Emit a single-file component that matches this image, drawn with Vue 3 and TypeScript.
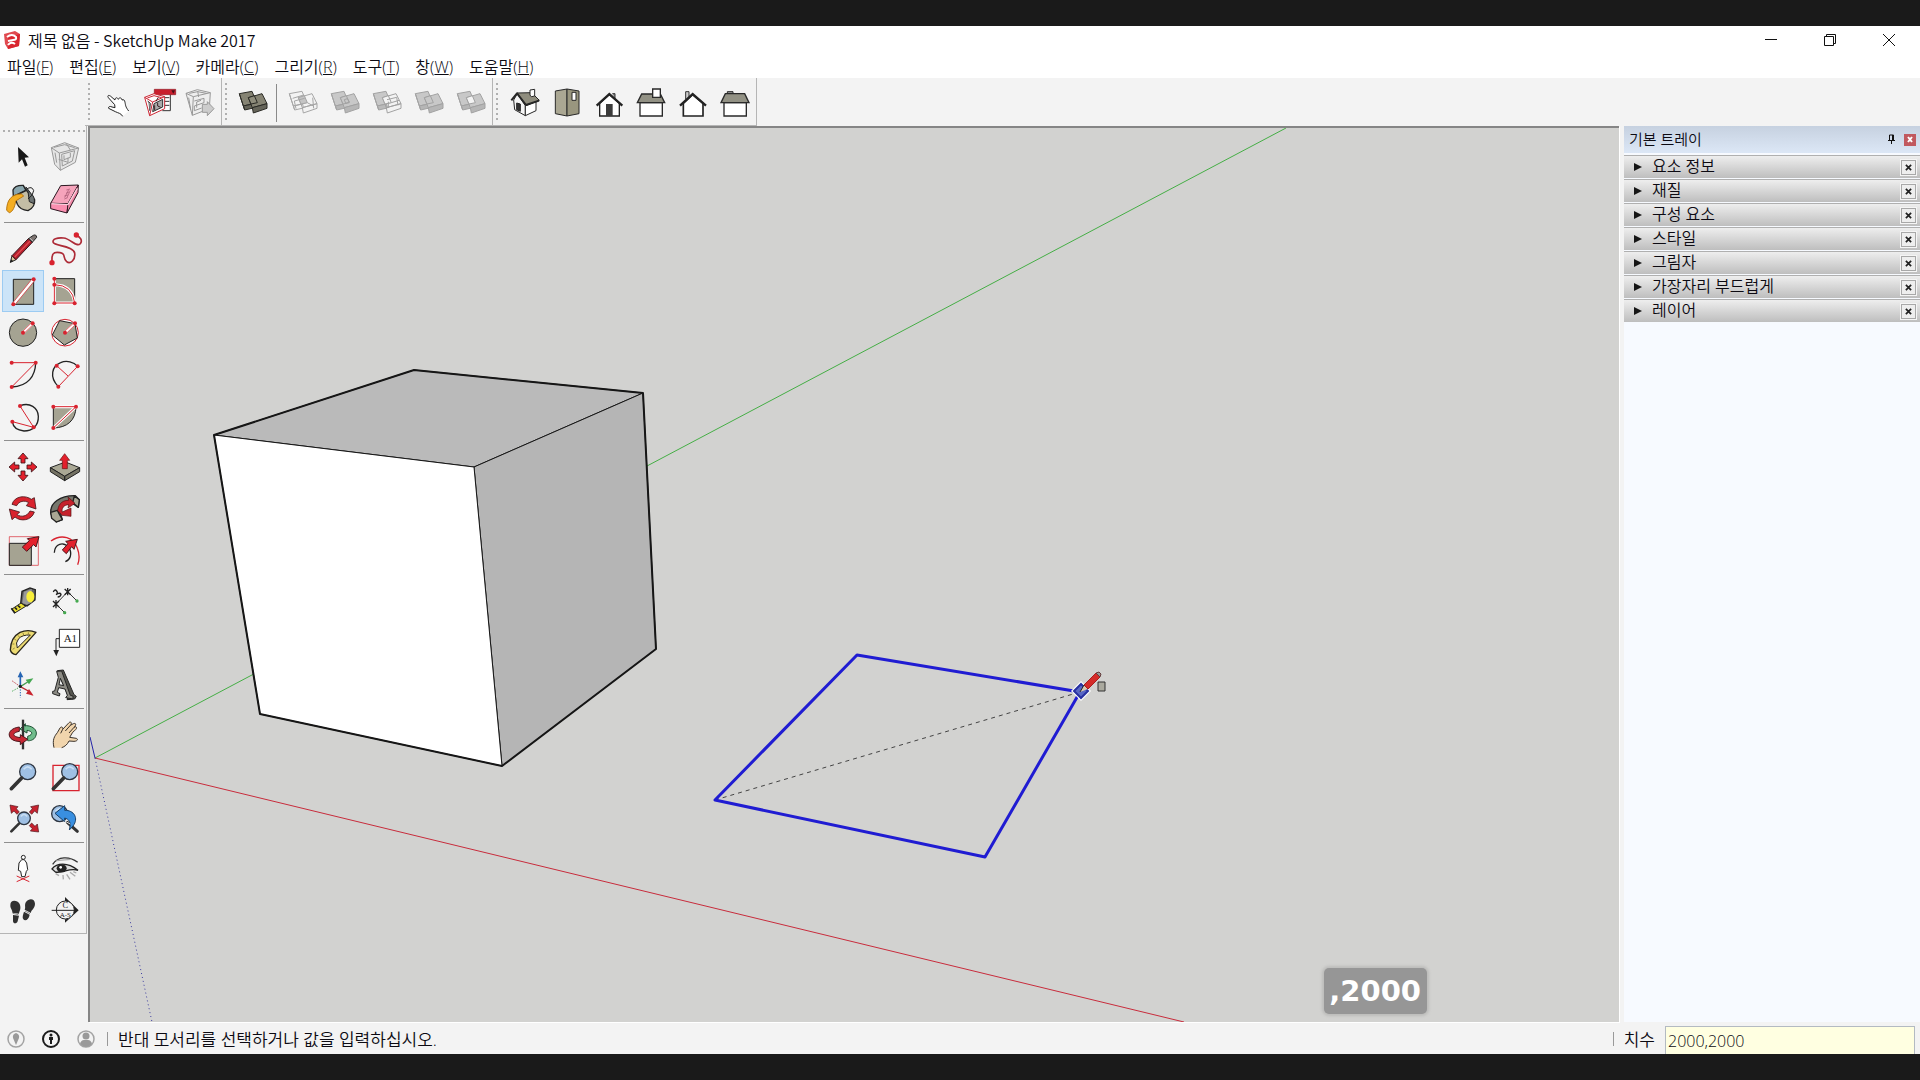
<script setup lang="ts">
import { ref } from 'vue'

interface Icon {
  name: string
  box: string
  art: string
}

const menus = [
  { label: '파일', key: 'F' },
  { label: '편집', key: 'E' },
  { label: '보기', key: 'V' },
  { label: '카메라', key: 'C' },
  { label: '그리기', key: 'R' },
  { label: '도구', key: 'T' },
  { label: '창', key: 'W' },
  { label: '도움말', key: 'H' },
]

const panels = ['요소 정보', '재질', '구성 요소', '스타일', '그림자', '가장자리 부드럽게', '레이어']

const size = ref('2000,2000')

const TAUPE = '#a5a392'
const RED = '#d8232f'

// Two overlapping boxes, shared by all solid tools
function solid(stroke: string, a: string, b: string, mid: string, side: string, extra = ''): string {
  return `<g stroke="${stroke}" stroke-width="3" stroke-linejoin="round">
    <polygon fill="${a}" points="22,35 60,28 74,62 34,72"/>
    <polygon fill="${a === 'none' ? 'none' : side}" points="34,72 62,66 64,78 38,84"/>
    <path fill="none" d="M22 35L26 48L38 84"/>
    <polygon fill="${b}" points="49,47 90,35 105,65 61,77"/>
    <polygon fill="${b === 'none' ? 'none' : side}" points="61,77 105,65 105,79 64,93"/>
    <polygon fill="${mid}" points="49,47 67,41 76,62 57,66"/>${extra}</g>`
}

// A node handle used by the drawing tools
const dot = (x: number, y: number) => `<circle cx="${x}" cy="${y}" r="6" fill="${RED}"/>`
const arrow = (x: number, y: number, angle: number) =>
  `<path transform="translate(${x} ${y}) rotate(${angle})" d="M0 -42L15 -25H6V-12H-6V-25H-15Z" fill="#e3202c" stroke="#3a1518" stroke-width="2.5"/>`
const lens = (x: number, y: number, r: number) =>
  `<circle cx="${x}" cy="${y}" r="${r}" fill="#9fc0e4" stroke="#2c3440" stroke-width="4"/><path d="M${x - r * 0.5} ${y - r * 0.3}Q${x} ${y - r * 0.9} ${x + r * 0.5} ${y - r * 0.3}" fill="none" stroke="#c9def3" stroke-width="5"/>`

const topGroups: Icon[][][] = [
  [[
    { name: '상호 작용', box: '45 18 126 126', art: '<path fill="#fff" stroke="#222" stroke-width="3" stroke-linejoin="round" d="M128 121C124 112 114 111 106 107L86 97C84 91 91 90 96 93L105 95L104 86L86 66C81 60 84 56 91 60L105 72C105 64 112 63 115 70C118 63 125 65 126 72C132 69 134 74 135 79C137 88 136 92 146 105"/>' },
    { name: '구성 요소 옵션', box: '171 18 126 126', art: '<path fill="#fff" d="M228 55H271V105H228Z"/><path d="M271 55V104H247M250 65H268M252 76H268M252 88H268" fill="none" stroke="#333" stroke-width="3"/><path fill="#c91f2d" stroke="#8d121d" stroke-width="2" d="M223 40H287V56H223Z"/><path d="M274 43H285L280 53Z" fill="#471018"/><g fill="#fff" stroke="#cc2634" stroke-width="3"><path d="M194 64L222 53L254 62V98L209 119Z"/><path fill="none" d="M194 64L218 78L209 119M218 78L254 62M202 66L222 59L245 65"/></g><path d="M222 83L248 70V93L218 107ZM203 75L211 82L209 104" fill="#aaa" stroke="#333" stroke-width="3"/><path d="M224 88V102M233 80V90L242 94M228 76L235 64" fill="none" stroke="#3a2024" stroke-width="3"/>' },
    { name: '구성 요소 속성', box: '297 18 126 126', art: '<g fill="none" stroke="#999" stroke-width="3"><path fill="#eee" d="M318 52L352 41L391 50L388 98L337 118Z"/><path d="M318 52L340 62L337 118M340 62L391 50M328 52L353 47L379 52M343 75L372 67V80L343 90V104L365 96M326 65L332 101M350 95V78L363 73M353 45L356 63"/><path fill="#ccc" d="M367 85H382V77L402 98L382 119V109H367Z"/></g>' },
  ]],
  [
    [{ name: '외부 쉘', box: '0 0 126 126', art: solid('#292924', '#858373', '#858373', '#8e8c7b', '#656459') }],
    [
      { name: '교차', box: '0 0 126 126', art: solid('#a6a6a6', 'none', 'none', '#c4c4c4', '#bbb', '<path fill="none" d="M32 49L65 39M42 80L37 57L68 49M76 62L94 72M92 47L95 79"/>') },
      { name: '결합', box: '0 0 126 126', art: solid('#a2a2a2', '#c8c8c8', '#c8c8c8', '#c8c8c8', '#b6b6b6', '<path fill="none" d="M61 53L70 50L76 60L65 64Z"/>') },
      { name: '빼기', box: '0 0 126 126', art: solid('#a2a2a2', '#c8c8c8', 'none', '#f3f3f3', '#bababa', '<path fill="none" d="M63 53L92 46L96 70M76 62L99 55M67 78V59"/>') },
      { name: '자르기', box: '0 0 126 126', art: solid('#a2a2a2', '#c8c8c8', '#c8c8c8', '#c8c8c8', '#b6b6b6') },
      { name: '분할', box: '0 0 126 126', art: solid('#a2a2a2', '#c8c8c8', '#c8c8c8', '#f3f3f3', '#b6b6b6') },
    ],
  ],
  [[
    { name: '등각', box: '219 18 126 126', art: '<g stroke="#262626" stroke-width="3" stroke-linejoin="round"><path fill="#f5f5f5" d="M262 53L251 72L254 101L286 119V89Z"/><path fill="#fff" d="M286 88L318 77V104L286 119Z"/><path fill="#333" d="M260 81L271 84V106L260 101Z"/><path fill="#8f8d7e" d="M261 51L305 50L328 73L288 89Z"/><path fill="none" stroke-width="6" d="M244 73L261 52L288 87L327 74"/><path fill="#fff" d="M300 42L314 40V60L305 62L300 58Z"/></g>' },
    { name: '상단', box: '345 18 126 126', art: '<g stroke="#292929" stroke-width="3" stroke-linejoin="round"><path fill="#aaa793" d="M376 45L411 39V120L376 113Z"/><path fill="#99967f" d="M411 39L447 45V113L411 120Z"/><path fill="#fff" d="M426 49H438V73H426Z"/></g>' },
    { name: '정면', box: '471 18 126 126', art: '<path d="M509 82V120H568V82L538 56Z" fill="#fff" stroke="#222" stroke-width="4"/><path d="M528 84H548V120H528Z" fill="#3b3b3b"/><path d="M547 53H555V67" fill="#888" stroke="#333" stroke-width="3"/><path d="M500 89L538 54L577 89" fill="none" stroke="#222" stroke-width="7"/>' },
    { name: '오른쪽', box: '597 18 126 126', art: '<g stroke="#292929" stroke-width="4"><path fill="#fff" d="M630 80H697V120H630Z"/><path fill="#929184" d="M635 54H691L704 80H622Z"/><path fill="#fff" d="M668 39H691V64H668Z"/></g>' },
    { name: '뒤', box: '723 18 126 126', art: '<path d="M767 70V47H777V62" fill="#ccc" stroke="#333" stroke-width="3"/><path d="M760 82V120H819V82L788 56Z" fill="#fff" stroke="#222" stroke-width="5"/><path d="M750 89L788 54L828 89" fill="none" stroke="#222" stroke-width="7"/>' },
    { name: '왼쪽', box: '849 18 126 126', art: '<g stroke="#292929" stroke-width="4"><path fill="#999" stroke-width="3" d="M892 52V47H909V52"/><path fill="#fff" d="M882 80H949V120H882Z"/><path fill="#929184" d="M886 53H944L957 80H873Z"/></g>' },
  ]],
]

const sideGroups: Icon[][] = [
  [
    { name: '선택', box: '6 33 126 126', art: '<path fill="#171717" d="M54 66L87 97L74 98L83 121L75 125L66 103L56 113Z"/>' },
    { name: '구성 요소 만들기', box: '132 33 126 126', art: '<g fill="none" stroke="#999" stroke-width="3" stroke-linejoin="round"><path fill="#e6e6e6" d="M154 68L194 53L236 69L226 112L181 136L164 118Z"/><path d="M154 68L178 84L181 136M178 84L236 69M162 67L194 59L224 68M185 88L224 77L217 108L187 123ZM165 83L170 113M199 56L211 75M176 103L204 112M192 91V104L211 97V84M204 98V112"/></g>' },
    { name: '페인트통', box: '6 159 126 126', art: '<path d="M39 195Q44 180 70 181L78 196L40 214Z" fill="#8aa6ad" stroke="#222" stroke-width="4"/><path d="M43 214L79 196L104 224Q106 247 84 257Q60 255 52 238Z" fill="#c3bda5" stroke="#222" stroke-width="4"/><path d="M70 183L84 200L88 230L102 236Q107 218 94 207L78 186" fill="#6d7474" stroke="#222" stroke-width="3"/><path d="M20 256C20 226 34 207 64 207L71 213L47 228C45 245 38 261 28 263Z" fill="#f5ae21" stroke="#b87812" stroke-width="3"/><path d="M79 193Q96 181 101 197Q100 211 84 222" fill="none" stroke="#222" stroke-width="3"/>' },
    { name: '지우개', box: '132 159 126 126', art: '<g stroke="#2b1720" stroke-width="3" stroke-linejoin="round"><path fill="#f6a3bb" d="M182 182L235 180L204 236L152 235Z"/><path fill="#fa8fb0" d="M152 235L204 236L201 264L152 251Z"/><path fill="#f18aa8" d="M235 180L234 203L201 264L204 236Z"/></g><path d="M154 236L204 239L232 190" stroke="#fbd0de" stroke-width="4" fill="none"/><path d="M193 222L203 218M193 213L204 210M198 205L207 201M199 195L210 192M194 218L206 194M201 218L211 196" stroke="#a3546f" stroke-width="2"/>' },
  ],
  [
    { name: '선', box: '6 309 126 126', art: '<path fill="#d9c49b" stroke="#222" stroke-width="3" d="M31 412L36 392L48 404Z"/><path d="M30 413L34 403L40 409Z" fill="#222"/><path d="M36 392L85 341L97 352L48 404Z" fill="#b41e2b" stroke="#321318" stroke-width="3"/><path d="M44 396L91 347" stroke="#e04b51" stroke-width="4"/><path d="M85 341L100 331Q109 327 110 337L97 352Z" fill="#7e7572" stroke="#222" stroke-width="3"/><path d="M89 338L100 349" stroke="#ddd" stroke-width="2"/>' },
    { name: '자유형', box: '132 309 126 126', art: `<path d="M228 331C241 334 249 348 240 357C230 367 211 341 191 339C172 337 155 343 160 353C164 363 220 362 224 384C227 404 211 419 200 410C187 399 199 386 180 383C157 379 155 389 156 412" fill="none" stroke="#ad2b37" stroke-width="5"/><circle cx="229" cy="330" r="8" fill="${RED}"/><circle cx="156" cy="413" r="8" fill="${RED}"/>` },
    { name: '직사각형', box: '6 15 126 126', art: `<path fill="${TAUPE}" stroke="#222" stroke-width="3" d="M40 43H101V118H40Z"/><path d="M40 118L101 43" stroke="#fff" stroke-width="9"/><path d="M38 114L97 41M43 121L104 47" stroke="${RED}" stroke-width="2"/>${dot(40, 118)}${dot(101, 43)}` },
    { name: '회전된 직사각형', box: '132 15 126 126', art: `<path fill="${TAUPE}" stroke="#222" stroke-width="3" d="M163 41H224V114H163Z"/><path d="M163 59Q218 60 224 114H163V41" fill="none" stroke="#fff" stroke-width="9"/><path d="M163 59Q218 60 224 114H163V41" fill="none" stroke="${RED}" stroke-width="3"/>${dot(163, 41)}${dot(163, 59)}${dot(163, 115)}${dot(224, 115)}` },
    { name: '원', box: '6 141 126 126', art: `<circle cx="69" cy="203" r="41" fill="${TAUPE}" stroke="#222" stroke-width="3"/><path d="M69 203L98 175" stroke="#fff" stroke-width="9"/><path d="M66 201L95 173M71 206L101 177" stroke="${RED}" stroke-width="2"/>${dot(69, 203)}${dot(98, 175)}` },
    { name: '다각형', box: '132 141 126 126', art: `<circle cx="195" cy="203" r="40" fill="#fff" stroke="${RED}" stroke-width="3"/><path fill="${TAUPE}" stroke="#222" stroke-width="3" d="M179 167L225 176L232 219L193 240L157 210Z"/><path d="M195 203L225 175" stroke="#fff" stroke-width="9"/><path d="M192 201L222 173M198 206L228 177" stroke="${RED}" stroke-width="2"/>${dot(195, 203)}${dot(225, 175)}` },
    { name: '원호', box: '6 267 126 126', art: `<path d="M107 293C106 333 84 364 35 366" fill="none" stroke="#222" stroke-width="4"/><path d="M35 293H107L35 366" fill="none" stroke="${RED}" stroke-width="3"/>${dot(35, 293)}${dot(107, 293)}${dot(35, 366)}` },
    { name: '2점 원호', box: '132 267 126 126', art: `<path d="M175 365C146 334 157 303 182 293C200 285 221 291 233 304" fill="none" stroke="#222" stroke-width="4"/><path d="M233 304L175 365M170 302L204 333" stroke="${RED}" stroke-width="3"/>${dot(170, 302)}${dot(233, 304)}${dot(175, 365)}` },
    { name: '3점 원호', box: '6 393 126 126', art: `<path d="M61 422C89 411 114 428 115 454C116 483 97 498 72 498C52 496 39 485 37 470" fill="none" stroke="#222" stroke-width="4"/><path d="M60 423L101 487L37 470" fill="none" stroke="${RED}" stroke-width="3"/>${dot(60, 423)}${dot(101, 487)}${dot(37, 470)}` },
    { name: '파이', box: '132 393 126 126', art: `<path d="M228 425C227 466 202 488 160 489V425Z" fill="${TAUPE}" stroke="#222" stroke-width="3"/><path d="M160 489L228 425H160" fill="none" stroke="#fff" stroke-width="9"/><path d="M160 489L228 425H160" fill="none" stroke="${RED}" stroke-width="3"/>${dot(160, 425)}${dot(228, 425)}${dot(160, 489)}` },
  ],
  [
    { name: '이동', box: '6 18 126 126', art: [0, 90, 180, 270].map((a) => arrow(69, 81, a)).join('') },
    { name: '밀기/끌기', box: '132 18 126 126', art: '<g stroke="#222" stroke-width="3" stroke-linejoin="round"><path fill="#aaa895" d="M151 83L196 66L239 83L194 109Z"/><path fill="#757364" d="M151 83V95L194 122V109ZM239 83V95L194 122V109Z"/></g><path d="M194 41L209 61H202V86H187V61H179Z" fill="#e3202c" stroke="#611" stroke-width="2"/>' },
    { name: '회전', box: '6 144 126 126', art: '<g fill="#d9232e" stroke="#4b171b" stroke-width="2.5"><path d="M36 193C44 167 77 165 94 178L103 173L108 207L79 197L86 188C74 180 57 183 50 197Z"/><path d="M103 216C95 242 62 246 45 231L36 239L28 207L59 216L51 224C64 232 81 230 90 213Z"/></g>' },
    { name: '따라가기', box: '132 144 126 126', art: '<g stroke="#222" stroke-width="4" stroke-linejoin="round"><path d="M153 222C147 188 182 166 226 167L238 179L235 202L219 191C186 188 174 205 187 239L169 246Z" fill="#77776d"/><path fill="#aaa895" d="M152 217L172 211L187 239L169 246L155 235ZM223 168L238 179L235 202L218 188Z"/></g><path d="M173 211C177 187 191 181 206 181L204 171L225 190L204 204L206 194C191 195 184 205 187 216L213 204V229L186 226Z" fill="#c6222c" stroke="#511" stroke-width="2"/>' },
    { name: '배율', box: '6 270 126 126', art: `<path d="M28 290H115V376H28Z" fill="none" stroke="${RED}" stroke-width="2"/><path d="M28 310H94V376H28Z" fill="${TAUPE}" stroke="#222" stroke-width="3"/><path d="M117 290L108 321L101 314L80 334L67 321L88 302L82 296Z" fill="#e3202c" stroke="#4b171b" stroke-width="3"/>` },
    { name: '오프셋', box: '132 270 126 126', art: `<path d="M153 303C185 280 221 292 232 325C240 346 238 361 233 374" fill="none" stroke="${RED}" stroke-width="4"/><path d="M163 338C164 311 190 303 207 323C218 343 210 360 196 365" fill="none" stroke="#222" stroke-width="4"/><path d="M232 298L222 328L215 320L199 341L187 330L204 311L197 304Z" fill="#e3202c" stroke="#4b171b" stroke-width="3"/>` },
  ],
  [
    { name: '줄자', box: '6 30 126 126', art: '<path d="M66 64L90 54L106 59L105 90L81 108L62 101Z" fill="#666" stroke="#222" stroke-width="4"/><path d="M72 65L95 57V98L80 104L67 99Z" fill="#999"/><ellipse cx="91" cy="80" rx="12" ry="17" fill="#f8ee3b"/><path d="M63 99L36 117L44 129L77 109Z" fill="#eadf33" stroke="#222" stroke-width="3"/><path d="M34 115L45 130M45 113L51 119M54 107L61 113" stroke="#222" stroke-width="5"/>' },
    { name: '치수', box: '132 30 126 126', art: '<path d="M231 93L203 65L168 102L194 128" fill="none" stroke="#333" stroke-width="3"/><path d="M194 57L212 74M212 57L194 74M203 54V76M159 93L177 111M177 93L159 111M168 90V115" stroke="#222" stroke-width="4"/><circle cx="231" cy="93" r="5" fill="#45a94f"/><circle cx="194" cy="128" r="5" fill="#45a94f"/><path d="M160 66Q164 56 170 63Q175 70 168 74Q180 66 183 73Q182 80 173 81" fill="none" stroke="#222" stroke-width="4"/>' },
    { name: '각도기', box: '6 156 126 126', art: '<path d="M48 254L108 187Q84 177 60 187Q32 202 31 240Q34 252 48 254Z" fill="#ecdb72" stroke="#29251a" stroke-width="4" stroke-linejoin="round"/><path d="M38 238L44 234M37 222L43 222M43 207L49 211M54 196L59 202M69 189L71 195M85 187L85 192" stroke="#705f21" stroke-width="2"/><path d="M52 234L91 195Q67 194 56 206Q45 218 52 234Z" fill="#f7f7f4" stroke="#29251a" stroke-width="3"/>' },
    { name: '텍스트', box: '132 156 126 126', art: '<path d="M178 178H239V232H178Z" fill="#fff" stroke="#222" stroke-width="3"/><path d="M178 206H168V246" fill="none" stroke="#222" stroke-width="3"/><path d="M160 240H177L169 259Z" fill="#222"/><text x="191" y="215" font-family="Liberation Serif" font-size="33" font-weight="400" fill="#222">A1</text>' },
    { name: '축', box: '6 282 126 126', art: '<path d="M61 319V350" stroke="#2665b4" stroke-width="5"/><path d="M61 304L70 322H53Z" fill="#2665b4"/><path d="M61 350L83 336" stroke="#459b50" stroke-width="4"/><path d="M100 325L87 343L77 329Z" fill="#45a852"/><path d="M61 350L85 363" stroke="#b82630" stroke-width="4"/><path d="M101 377L78 371L87 357Z" fill="#c9242e"/><path d="M37 333L61 350" stroke="#b82630" stroke-width="3" stroke-dasharray="4 4"/><path d="M61 350V383" stroke="#2665b4" stroke-width="3" stroke-dasharray="4 4"/><path d="M61 350L36 364" stroke="#45a852" stroke-width="3" stroke-dasharray="4 4"/><circle cx="61" cy="349" r="5" fill="#222"/>' },
    { name: '3D 텍스트', box: '132 282 126 126', art: '<g fill="#8c8b84" stroke="#252525" stroke-width="3" stroke-linejoin="round"><path fill="#55554f" d="M172 302L190 300L222 374L229 379L224 387L201 389L205 379Z"/><path fill-rule="evenodd" d="M170 304L185 303L211 376L219 378V387L197 383L202 376L195 357L176 353L172 367L180 371L178 378L158 371V364L164 363L175 322ZM181 325L177 344L191 347Z"/></g>' },
  ],
  [
    { name: '궤도', box: '6 27 126 126', art: '<path d="M69 62C96 59 116 75 107 94C102 106 88 108 83 107V94C102 88 97 78 81 76V84L60 72L76 56V64" fill="#70bd8c" stroke="#1e5134" stroke-width="3"/><path d="M69 44V133" stroke="#333" stroke-width="7"/><path d="M58 66C20 71 19 101 47 108L61 110V119L83 103L61 89V98C37 95 34 84 58 79Z" fill="#c62835" stroke="#4c151b" stroke-width="3"/>' },
    { name: '이동 보기', box: '132 27 126 126', art: '<path d="M162 128C156 104 164 93 172 83L180 69C184 63 190 67 188 73L207 53C212 48 218 54 211 61L220 56C229 53 229 60 222 67L227 65C233 68 229 73 218 82L209 97L229 100C236 103 231 109 222 109L207 108C202 119 194 125 185 128Z" fill="#f1d5ad"/><path d="M162 128C156 104 164 93 172 83L180 69C184 63 190 67 188 73L207 53C212 48 218 54 211 61L220 56C229 53 229 60 222 67L227 65C233 68 229 73 218 82L209 97L229 100C236 103 231 109 222 109L207 108C202 119 194 125 185 128M188 73L182 85M211 61L196 78M222 67L207 84" fill="none" stroke="#3b332b" stroke-width="3"/>' },
    { name: '확대/축소', box: '6 153 126 126', art: `${lens(83, 200, 24)}<path d="M65 219L34 251" stroke="#333" stroke-width="11" stroke-linecap="round"/>` },
    { name: '창 확대/축소', box: '132 153 126 126', art: `<path d="M159 181H237V257H159Z" fill="none" stroke="${RED}" stroke-width="4"/>${lens(209, 200, 24)}<path d="M191 219L160 251" stroke="#333" stroke-width="11" stroke-linecap="round"/>` },
    { name: '전체 확대/축소', box: '6 279 126 126', art: `${lens(72, 340, 19)}<path d="M57 356L34 379" stroke="#333" stroke-width="8" stroke-linecap="round"/><g fill="#c6222e" stroke="#4c151b" stroke-width="2"><path d="M30 300L54 305L49 311L58 321L51 328L42 318L34 325Z"/><path d="M116 300L92 305L97 311L88 321L95 328L104 318L112 325Z"/><path d="M116 381L91 378L97 371L88 362L95 354L105 364L112 357Z"/></g>` },
    { name: '이전 보기', box: '132 279 126 126', art: `${lens(179, 326, 24)}<path d="M202 352L232 379" stroke="#333" stroke-width="9" stroke-linecap="round"/><path d="M165 325L194 302V316C222 315 237 340 219 363L208 375C215 349 206 343 194 339V350Z" fill="#398fe0" stroke="#173f66" stroke-width="3"/><path d="M194 348L211 357" stroke="#ddd" stroke-width="3"/>` },
  ],
  [
    { name: '카메라 배치', box: '6 429 126 126', art: `<path d="M50 530L88 513M50 513L88 530" stroke="${RED}" stroke-width="3"/><path d="M65 464L57 474L55 496L62 499L65 515H75L79 499L83 494L80 474L73 464Z" fill="#fff" stroke="#222" stroke-width="3"/><circle cx="70" cy="457" r="6" fill="#fff" stroke="#222" stroke-width="3"/>` },
    { name: '둘러보기', box: '132 429 126 126', art: '<path d="M158 478C174 454 208 453 233 472" fill="none" stroke="#333" stroke-width="4"/><path d="M156 492C170 474 202 470 234 496C207 487 190 506 166 501Z" fill="#ddd" stroke="#222" stroke-width="4"/><ellipse cx="185" cy="490" rx="15" ry="12" fill="#222"/><circle cx="182" cy="487" r="4" fill="#fff"/><path d="M167 506L177 512M189 510L190 523M200 508L210 523M210 502L226 514M220 500L229 504M169 467L212 463" stroke="#aaa" stroke-width="4"/>' },
    { name: '걷기', box: '6 555 126 126', art: '<path d="M31 600C31 583 52 585 59 597C65 611 57 621 57 626L37 623C38 615 30 610 31 600ZM39 630L57 632L53 649C49 659 37 656 39 644ZM78 591C87 579 104 580 105 596C105 612 91 616 93 624L74 614C78 607 72 600 78 591ZM72 620L89 629C87 643 76 650 70 643C66 638 69 629 72 620Z" fill="#303030"/><path d="M38 625L55 629M75 618L90 626" stroke="#888" stroke-width="3"/>' },
    { name: '단면 평면', box: '132 555 126 126', art: '<path d="M195 576L236 616L195 653V643A27 27 0 0 0 195 588Z" fill="#222"/><circle cx="196" cy="615" r="27" fill="#f3f3f3" stroke="#222" stroke-width="3"/><path d="M155 616H233" stroke="#222" stroke-width="3"/><g font-family="Liberation Serif" fill="#222" text-anchor="middle"><text x="196" y="610" font-size="25">C</text><text x="196" y="636" font-size="21">A-S</text></g>' },
  ],
]
</script>

<template>
  <div class="app">
    <header class="titlebar">
      <svg class="logo" viewBox="0 0 18 20" aria-hidden="true">
        <path d="M1 4L12 1L17 4L16 16L5 19L2 14Z" fill="#e04a50" />
        <path d="M5 7L17 4L16 16L5 19Z" fill="#d9252e" />
        <path d="M4 7Q9 3 13 7Q14 10 10 10L5 11M5 15Q8 11 12 14" fill="none" stroke="#fff" stroke-width="2" />
      </svg>
      <h1>제목 없음 - SketchUp Make 2017</h1>
      <div class="window-buttons">
        <button aria-label="최소화"><svg viewBox="0 0 14 14"><path d="M1 6.5H13" /></svg></button>
        <button aria-label="이전 크기로"><svg viewBox="0 0 14 14"><path d="M1.5 3.5H10.500V12.500H1.500ZM3.500 3.500V1.500H12.500V10.500H10.500" /></svg></button>
        <button aria-label="닫기"><svg viewBox="0 0 14 14"><path d="M1 1L13 13M13 1L1 13" /></svg></button>
      </div>
    </header>

    <nav class="menubar">
      <button v-for="m in menus" :key="m.key">{{ m.label }}(<u>{{ m.key }}</u>)</button>
    </nav>

    <div class="top-tools">
      <div v-for="(group, g) in topGroups" :key="g" class="top-group">
        <div v-for="(part, p) in group" :key="p" class="part">
          <button v-for="icon in part" :key="icon.name" class="tool" :aria-label="icon.name">
            <svg :viewBox="icon.box" v-html="icon.art"></svg>
          </button>
        </div>
      </div>
    </div>

    <div class="workspace">
      <aside class="side">
        <div class="side-tools">
          <div v-for="(group, g) in sideGroups" :key="g" class="side-group">
            <button
              v-for="icon in group"
              :key="icon.name"
              class="tool"
              :class="{ active: icon.name === '직사각형' }"
              :aria-label="icon.name"
            >
              <svg :viewBox="icon.box" v-html="icon.art"></svg>
            </button>
          </div>
        </div>
      </aside>

      <main class="viewport">
        <svg class="scene" viewBox="90 128 1529 894" preserveAspectRatio="xMinYMin slice" fill="none">
          <path d="M95 758L1286 128" stroke="#45ae45" />
          <path d="M95 758L1184 1022" stroke="#c82c3c" />
          <path d="M90 737L95 758" stroke="#2424a8" />
          <path d="M95 758L152 1022" stroke="#3c3ca0" stroke-dasharray="1 3" />
          <g stroke="#161616" stroke-linejoin="round">
            <path d="M214 435L414 370L643 393L474 467Z" fill="#bababa" />
            <path d="M474 467L643 393L656 649L502 766Z" fill="#b5b5b5" />
            <path d="M214 435L474 467L502 766L260 714Z" fill="#fff" />
            <path d="M214 435L414 370L643 393L656 649L502 766L260 714Z" stroke-width="2" />
          </g>
          <path d="M715 800L1080 692" stroke="#444" stroke-dasharray="4 4" />
          <path d="M857 655L1080 692L985 857L715 800Z" stroke="#201cd2" stroke-width="3" stroke-linejoin="round" />
          <path d="M1081 681L1091 691L1081 701L1071 691Z" fill="#fff" />
          <path d="M1081 684L1088 691L1081 698L1074 691Z" fill="#5867c4" stroke="#2730a0" stroke-width="2" />
          <path d="M1080 692L1084 685L1088 689Z" fill="#d8c8b0" />
          <path d="M1084 685L1096 673L1100 677L1088 689Z" fill="#d42b29" stroke="#a81e20" />
          <path d="M1080 692L1084 685" stroke="#222" />
          <path d="M1096 673L1099 672L1101 674L1100 677Z" fill="#999" stroke="#643c3c" />
          <path d="M1098 682H1105V691H1098Z" fill="#aaa99e" stroke="#333" />
        </svg>
        <output class="typed">,2000</output>
      </main>

      <aside class="tray">
        <header class="tray-head">
          <h2>기본 트레이</h2>
          <button class="pin" aria-label="고정">
            <svg viewBox="0 0 9 11"><path d="M2.500 1V6.500H6.500V1ZM1 6.500H8M4.500 7V10M5.500 1V6" /></svg>
          </button>
          <button class="tray-close" aria-label="닫기">
            <svg viewBox="0 0 12 12"><path d="M4 3L8 8M8 3L4 8" /></svg>
          </button>
        </header>
        <section v-for="name in panels" :key="name" class="panel">
          <button class="panel-title"><span class="tri"></span>{{ name }}</button>
          <button class="panel-close" aria-label="닫기">
            <svg viewBox="0 0 8 8"><path d="M1 1L7 7M7 1L1 7" /></svg>
          </button>
        </section>
      </aside>
    </div>

    <footer class="status">
      <button aria-label="지리적 위치">
        <svg viewBox="0 0 18 18"><circle cx="9" cy="9" r="8" fill="none" stroke="#a3a3a3" stroke-width="1.500" /><path d="M9 3A4 4 0 0 1 12 8L9 15L6 8A4 4 0 0 1 9 3Z" fill="#999" /></svg>
      </button>
      <button aria-label="크레딧">
        <svg viewBox="0 0 18 18"><circle cx="9" cy="9" r="8" fill="none" stroke="#1c1c1c" stroke-width="2" /><circle cx="9" cy="5" r="1.500" fill="#1c1c1c" /><path d="M7 7H11V10H10V14H8V10H7Z" fill="#1c1c1c" /></svg>
      </button>
      <button aria-label="로그인">
        <svg viewBox="0 0 18 18"><circle cx="9" cy="9" r="8" fill="none" stroke="#a3a3a3" stroke-width="1.500" /><circle cx="9" cy="6" r="3.500" fill="#999" /><path d="M3 14Q4 10 7 10H11Q14 10 15 14Q12 17 9 17T3 14Z" fill="#999" /></svg>
      </button>
      <p class="hint">반대 모서리를 선택하거나 값을 입력하십시오.</p>
      <label for="size">치수</label>
      <input id="size" v-model="size" type="text" />
    </footer>
  </div>
</template>

<style>
body {
  margin: 0;
  background: #1a1a1a;
}
</style>

<style scoped>
.app {
  box-sizing: border-box;
  height: 100vh;
  min-height: 990px;
  padding: 26px 0;
  display: flex;
  flex-direction: column;
  background: #1a1a1a;
  color: #0c0a12;
  font-family: 'Open Sans', 'Noto Sans CJK KR', sans-serif;
  font-size: 15px;
  font-weight: 350;
}

button {
  padding: 0;
  border: 0;
  background: none;
  color: inherit;
  font: inherit;
}

svg {
  display: block;
}

h1,
h2,
p {
  margin: 0;
  font-size: inherit;
  font-weight: inherit;
}

.titlebar {
  flex: none;
  display: flex;
  align-items: center;
  height: 28px;
  padding-left: 3px;
  background: #fff;
}

.titlebar h1 {
  font-family: 'Noto Sans CJK KR', sans-serif;
  font-size: 16px;
  line-height: 24px;
}

.logo {
  width: 18px;
  height: 20px;
  margin-right: 7px;
}

.window-buttons {
  display: flex;
  margin-left: auto;
  padding-right: 2px;
}

.window-buttons button {
  width: 59px;
  height: 28px;
  display: grid;
  place-items: center;
}

.window-buttons svg {
  width: 14px;
  height: 14px;
  fill: none;
  stroke: #111;
}

.menubar {
  flex: none;
  display: flex;
  gap: 16px;
  height: 24px;
  padding-left: 7px;
  background: #fff;
  font-size: 16px;
}

.menubar button {
  line-height: 26px;
}

.top-tools {
  flex: none;
  display: flex;
  height: 48px;
  padding-left: 85px;
  background: #f3f3f3;
}

.top-group {
  position: relative;
  display: flex;
  padding: 4px 0 0 10px;
  border-right: 1px solid #b5b5b5;
  border-bottom: 1px solid #b5b5b5;
}

.top-group:last-child {
  padding-right: 1px;
}

.top-group::before {
  content: '';
  position: absolute;
  left: 3px;
  top: 5px;
  bottom: 2px;
  width: 2px;
  background: repeating-linear-gradient(#b0b0b0 0 2px, transparent 2px 5px);
}

.part {
  display: flex;
}

.part + .part::before {
  content: '';
  width: 1px;
  height: 38px;
  margin: 2px 5px 0 2px;
  background: #8a8a8a;
}

.tool {
  width: 42px;
  height: 42px;
}

.tool svg {
  width: 42px;
  height: 42px;
}

.tool.active {
  background: #cce4f8;
  box-shadow: inset 0 0 0 1px #9ccbf2;
}

.workspace {
  flex: 1;
  min-height: 0;
  display: flex;
  background: #f3f3f3;
}

.side {
  flex: none;
  width: 88px;
}

.side-tools {
  position: relative;
  width: 84px;
  padding: 10px 0 1px 2px;
  border-right: 1px solid #b5b5b5;
  border-bottom: 1px solid #b5b5b5;
}

.side-tools::before {
  content: '';
  position: absolute;
  left: 3px;
  right: 1px;
  top: 4px;
  height: 2px;
  background: repeating-linear-gradient(90deg, #b0b0b0 0 2px, transparent 2px 5px);
}

.side-group {
  display: flex;
  flex-wrap: wrap;
}

.side-group + .side-group::before {
  content: '';
  width: 80px;
  height: 1px;
  margin: 2px 2px 5px;
  background: #8f8f8f;
}

.viewport {
  position: relative;
  flex: 1;
  min-width: 0;
  margin: 0 5px 2px 0;
  border: 2px solid #858585;
  border-right: 0;
  border-bottom: 0;
  background: #d2d2d0;
  box-shadow: 1px 1px 0 #fff;
  overflow: hidden;
}

.scene {
  width: 100%;
  height: 100%;
}

.typed {
  position: absolute;
  right: 192px;
  bottom: 8px;
  padding: 0 6px 0 5px;
  border-radius: 5px;
  background: #969696;
  box-shadow: 0 0 3px 2px #bcbcba;
  color: #fff;
  font: bold 29px/46px 'DejaVu Sans', sans-serif;
}

.tray {
  flex: none;
  width: 296px;
  margin-bottom: 2px;
  background: #f7faff;
}

.tray-head {
  display: flex;
  align-items: center;
  height: 27px;
  margin-bottom: 2px;
  padding: 0 4px 0 5px;
  background: linear-gradient(#c6d1e0, #dce7f6);
}

.tray-head h2 {
  flex: 1;
  padding-bottom: 2px;
}

.pin {
  margin-right: 8px;
}

.pin svg {
  width: 9px;
  height: 11px;
  fill: none;
  stroke: #111;
}

.tray-close {
  background: #c1595f;
}

.tray-close svg {
  width: 12px;
  height: 12px;
  stroke: #fff;
  stroke-width: 2;
}

.panel {
  box-sizing: border-box;
  display: flex;
  align-items: center;
  height: 23px;
  margin-bottom: 1px;
  padding: 0 4px 0 10px;
  border-top: 1px solid #b0b0b0;
  background: linear-gradient(#eeeeee, #bebebe);
  font-size: 16px;
}

.panel-title {
  flex: 1;
  display: flex;
  align-items: center;
  padding-bottom: 2px;
  line-height: 20px;
  text-align: left;
}

.tri {
  margin: 2px 10px 0 0;
  border: solid transparent;
  border-width: 4px 0 4px 8px;
  border-left-color: #161616;
}

.panel-close {
  display: grid;
  place-items: center;
  width: 15px;
  height: 15px;
  border: 1px solid #a8a8a8;
  background: #eee;
  box-shadow: 0 0 0 1px #f5f5f5;
  box-sizing: border-box;
}

.panel-close svg {
  width: 7px;
  height: 7px;
  stroke: #222;
  stroke-width: 2;
}

.status {
  flex: none;
  display: flex;
  align-items: center;
  height: 30px;
  padding: 0 5px 0 7px;
  background: #f3f3f3;
  font-size: 17px;
}

.status button {
  margin-right: 17px;
}

.status button svg {
  width: 18px;
  height: 18px;
}

.hint,
.status label {
  padding: 2px 10px 0 11px;
  line-height: 16px;
  background: linear-gradient(#999, #999) left center / 1px 14px no-repeat;
}

.hint {
  flex: 1;
  margin-left: -5px;
}

.status input {
  align-self: flex-end;
  box-sizing: border-box;
  width: 250px;
  height: 28px;
  padding: 0 2px;
  border: 1px solid #b3bac2;
  border-bottom: 0;
  border-radius: 0;
  background: #ffffe1;
  color: inherit;
  font: inherit;
  font-size: 16px;
}
</style>
